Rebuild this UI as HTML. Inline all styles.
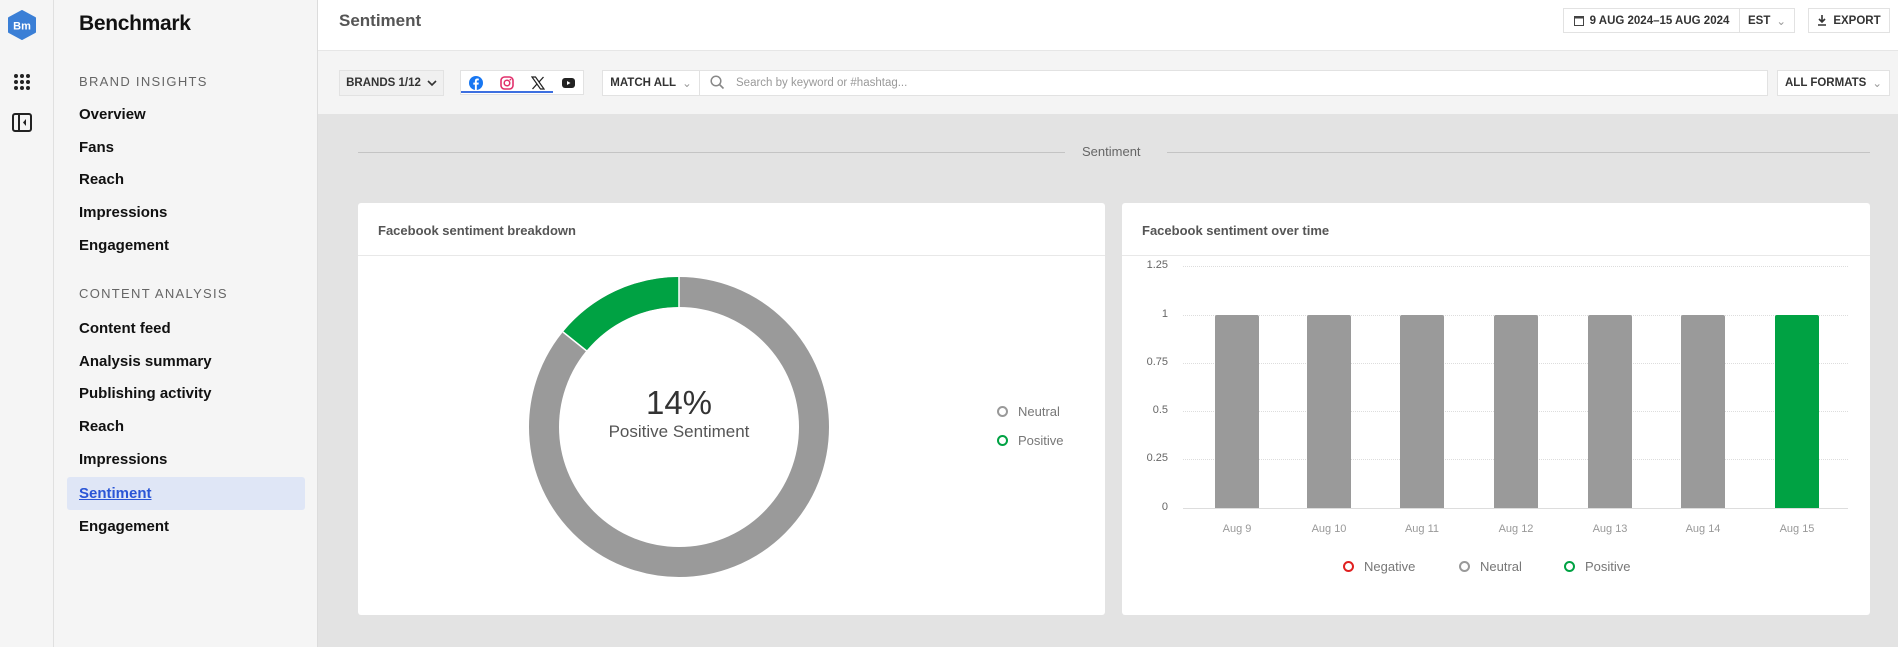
<!DOCTYPE html>
<html><head><meta charset="utf-8">
<style>
*{box-sizing:border-box;margin:0;padding:0}
body{width:1898px;height:647px;overflow:hidden;background:#e3e3e3;font-family:"Liberation Sans",sans-serif;position:relative}
.abs{position:absolute}
.rail{left:0;top:0;width:54px;height:647px;background:#f5f5f5;border-right:1px solid #e0e0e0}
.side{left:54px;top:0;width:264px;height:647px;background:#f5f5f5;border-right:1px solid #dcdcdc}
.side .t{position:absolute;left:25px;font-size:15px;font-weight:bold;color:#111}
.side .h{position:absolute;left:25px;font-size:13px;color:#666;letter-spacing:1.3px}
.hdr{left:318px;top:0;width:1580px;height:51px;background:#fff;border-bottom:1px solid #e6e6e6}
.fb{left:318px;top:51px;width:1580px;height:63px;background:#f4f4f4}
.btn{position:absolute;background:#fff;border:1px solid #e2e2e2;font-size:11.5px;font-weight:bold;color:#333;display:flex;align-items:center;justify-content:center;gap:6px}
.card{background:#fff;border-radius:3px}
.ct{position:absolute;left:20px;top:20px;font-size:13px;font-weight:bold;color:#555}
.cl{position:absolute;left:0;right:0;top:52px;border-top:1px solid #e8e8e8}
.yl{position:absolute;font-size:11px;color:#666;text-align:right;width:40px}
.xl{position:absolute;font-size:11px;color:#999;width:60px;text-align:center}
.bar{position:absolute;width:44px;top:315px;height:193px;background:#9a9a9a;border-radius:2px 2px 0 0}
.grid{position:absolute;left:1183px;width:665px;border-top:1px dotted #ddd}
.lg{position:absolute;font-size:13px;color:#777;display:flex;align-items:center;gap:10px}
.ring{width:11px;height:11px;border-radius:50%;border:2px solid #999;display:inline-block}
</style></head><body>

<div class="abs rail">
  <svg class="abs" style="left:8px;top:10px" width="28" height="30" viewBox="0 0 28 30"><polygon points="14,1 27,8 27,22 14,29 1,22 1,8" fill="#3b7fd6" stroke="#3b7fd6" stroke-linejoin="round" stroke-width="2"/><text x="14" y="19.5" font-size="11" font-family="Liberation Sans" fill="#fff" text-anchor="middle" font-weight="bold">Bm</text></svg>
  <svg class="abs" style="left:13px;top:73px" width="18" height="18" viewBox="0 0 18 18" fill="#222"><circle cx="3" cy="3" r="2"/><circle cx="9" cy="3" r="2"/><circle cx="15" cy="3" r="2"/><circle cx="3" cy="9" r="2"/><circle cx="9" cy="9" r="2"/><circle cx="15" cy="9" r="2"/><circle cx="3" cy="15" r="2"/><circle cx="9" cy="15" r="2"/><circle cx="15" cy="15" r="2"/></svg>
  <svg class="abs" style="left:12px;top:113px" width="20" height="19" viewBox="0 0 20 19"><rect x="1" y="1" width="18" height="17" rx="2" fill="none" stroke="#222" stroke-width="2"/><line x1="7" y1="1" x2="7" y2="18" stroke="#222" stroke-width="2"/><polygon points="14,6 11,9.5 14,13" fill="#222"/></svg>
</div>

<div class="abs side">
  <div class="abs" style="left:25px;top:12px;font-size:21px;font-weight:bold;color:#111;letter-spacing:-0.3px">Benchmark</div>
  <div class="h" style="top:74px">BRAND INSIGHTS</div>
  <div class="t" style="top:106px">Overview</div>
  <div class="t" style="top:139px">Fans</div>
  <div class="t" style="top:171px">Reach</div>
  <div class="t" style="top:204px">Impressions</div>
  <div class="t" style="top:237px">Engagement</div>
  <div class="h" style="top:286px">CONTENT ANALYSIS</div>
  <div class="t" style="top:320px">Content feed</div>
  <div class="t" style="top:353px">Analysis summary</div>
  <div class="t" style="top:385px">Publishing activity</div>
  <div class="t" style="top:418px">Reach</div>
  <div class="t" style="top:451px">Impressions</div>
  <div class="abs" style="left:13px;top:477px;width:238px;height:33px;background:#dfe6f6;border-radius:3px"></div>
  <div class="t" style="top:485px;color:#2a55d6;text-decoration:underline">Sentiment</div>
  <div class="t" style="top:518px">Engagement</div>
</div>

<div class="abs hdr">
  <div class="abs" style="left:21px;top:11px;font-size:17px;font-weight:bold;color:#555">Sentiment</div>
  <div class="btn" style="left:1245px;top:8px;width:177px;height:25px;font-size:11.5px"><svg width="10" height="11" viewBox="0 0 10 11"><rect x="0.5" y="1.5" width="9" height="9" fill="none" stroke="#444"/><rect x="0.5" y="1.5" width="9" height="2" fill="#444"/></svg>9 AUG 2024–15 AUG 2024</div>
  <div class="btn" style="left:1421px;top:8px;width:56px;height:25px">EST <span style="color:#999;font-weight:normal">&#8964;</span></div>
  <div class="btn" style="left:1490px;top:8px;width:82px;height:25px"><svg width="10" height="11" viewBox="0 0 10 11"><path d="M5 0v7M2 4l3 3 3-3M1 10h8" stroke="#333" stroke-width="1.6" fill="none"/></svg>EXPORT</div>
</div>

<div class="abs fb">
  <div class="btn" style="left:21px;top:19px;width:105px;height:26px;background:#f0f0f0">BRANDS 1/12 <svg width="10" height="7" viewBox="0 0 10 7"><path d="M1 1l4 4 4-4" stroke="#333" stroke-width="1.6" fill="none"/></svg></div>
  <div class="abs" style="left:142px;top:19px;width:124px;height:25px;background:#fff;border:1px solid #e2e2e2"></div>
  <div class="abs" style="left:143px;top:40px;width:92px;height:2px;background:#3d6fe0"></div>
  <svg class="abs" style="left:151px;top:25px" width="14" height="14" viewBox="0 0 14 14"><circle cx="7" cy="7" r="7" fill="#1877f2"/><path d="M7.8 14V8.6h1.7l.3-2H7.8V5.4c0-.6.2-1 1-1h1V2.6c-.2 0-.8-.1-1.5-.1-1.5 0-2.4.9-2.4 2.5v1.6H4.3v2h1.6V14z" fill="#fff"/></svg>
  <svg class="abs" style="left:182px;top:25px" width="14" height="14" viewBox="0 0 14 14"><rect x="1" y="1" width="12" height="12" rx="3.5" fill="none" stroke="#e1306c" stroke-width="1.6"/><circle cx="7" cy="7" r="2.8" fill="none" stroke="#e1306c" stroke-width="1.5"/><circle cx="10.4" cy="3.6" r="0.9" fill="#e1306c"/></svg>
  <svg class="abs" style="left:213px;top:25px" width="14" height="14" viewBox="0 0 14 14"><path d="M1 1h3.5l8.5 12H9.5z" fill="none" stroke="#222" stroke-width="1.2"/><path d="M12.5 1L8 6M1.5 13L6 8" stroke="#222" stroke-width="1.3"/></svg>
  <svg class="abs" style="left:244px;top:27px" width="13" height="10" viewBox="0 0 13 10"><rect width="13" height="10" rx="3" fill="#222"/><polygon points="5,3 5,7 8.5,5" fill="#fff"/></svg>
  <div class="btn" style="left:284px;top:19px;width:98px;height:26px">MATCH ALL <span style="color:#999;font-weight:normal">&#8964;</span></div>
  <div class="abs" style="left:381px;top:19px;width:1069px;height:26px;background:#fff;border:1px solid #e2e2e2"></div>
  <svg class="abs" style="left:392px;top:24px" width="15" height="15" viewBox="0 0 15 15"><circle cx="6" cy="6" r="4.8" fill="none" stroke="#888" stroke-width="1.5"/><path d="M9.5 9.5l4 4" stroke="#888" stroke-width="1.6"/></svg>
  <div class="abs" style="left:418px;top:26px;font-size:11.5px;color:#999">Search by keyword or #hashtag...</div>
  <div class="btn" style="left:1459px;top:19px;width:113px;height:26px">ALL FORMATS <span style="color:#999;font-weight:normal">&#8964;</span></div>
</div>

<div class="abs" style="left:358px;top:152px;width:707px;border-top:1px solid #c4c4c4"></div>
<div class="abs" style="left:1167px;top:152px;width:703px;border-top:1px solid #c4c4c4"></div>
<div class="abs" style="left:1082px;top:144px;font-size:13px;color:#666">Sentiment</div>

<div class="abs card" style="left:358px;top:203px;width:747px;height:412px">
  <div class="ct">Facebook sentiment breakdown</div><div class="cl"></div>
</div>
<svg class="abs" style="left:0;top:0" width="1898" height="647">
  <circle cx="679" cy="427" r="135" fill="none" stroke="#9a9a9a" stroke-width="30"/>
  <path d="M575,341 A135,135 0 0 1 679,292" fill="none" stroke="#00a243" stroke-width="30"/>
  <line x1="679" y1="276" x2="679" y2="308" stroke="#fff" stroke-width="1.5"/>
  <line x1="563" y1="332" x2="588" y2="352" stroke="#fff" stroke-width="1.5"/>
</svg>
<div class="abs" style="left:579px;top:384px;width:200px;text-align:center;font-size:33px;color:#333">14%</div>
<div class="abs" style="left:579px;top:422px;width:200px;text-align:center;font-size:17px;color:#555">Positive Sentiment</div>
<div class="lg" style="left:997px;top:404px"><span class="ring"></span>Neutral</div>
<div class="lg" style="left:997px;top:433px"><span class="ring" style="border-color:#00a243"></span>Positive</div>

<div class="abs card" style="left:1122px;top:203px;width:748px;height:412px">
  <div class="ct">Facebook sentiment over time</div><div class="cl"></div>
</div>
<div class="grid" style="top:266px"></div><div class="grid" style="top:315px"></div><div class="grid" style="top:363px"></div><div class="grid" style="top:411px"></div><div class="grid" style="top:459px"></div>
<div class="abs" style="left:1183px;top:508px;width:665px;border-top:1px solid #ddd"></div>
<div class="yl" style="left:1128px;top:259px">1.25</div>
<div class="yl" style="left:1128px;top:308px">1</div>
<div class="yl" style="left:1128px;top:356px">0.75</div>
<div class="yl" style="left:1128px;top:404px">0.5</div>
<div class="yl" style="left:1128px;top:452px">0.25</div>
<div class="yl" style="left:1128px;top:501px">0</div>
<div class="bar" style="left:1215px"></div>
<div class="bar" style="left:1307px"></div>
<div class="bar" style="left:1400px"></div>
<div class="bar" style="left:1494px"></div>
<div class="bar" style="left:1588px"></div>
<div class="bar" style="left:1681px"></div>
<div class="bar" style="left:1775px;background:#00a243"></div>
<div class="xl" style="left:1207px;top:523px">Aug 9</div>
<div class="xl" style="left:1299px;top:523px">Aug 10</div>
<div class="xl" style="left:1392px;top:523px">Aug 11</div>
<div class="xl" style="left:1486px;top:523px">Aug 12</div>
<div class="xl" style="left:1580px;top:523px">Aug 13</div>
<div class="xl" style="left:1673px;top:523px">Aug 14</div>
<div class="xl" style="left:1767px;top:523px">Aug 15</div>
<div class="lg" style="left:1343px;top:559px"><span class="ring" style="border-color:#e02020"></span>Negative</div>
<div class="lg" style="left:1459px;top:559px"><span class="ring"></span>Neutral</div>
<div class="lg" style="left:1564px;top:559px"><span class="ring" style="border-color:#00a243"></span>Positive</div>

</body></html>
